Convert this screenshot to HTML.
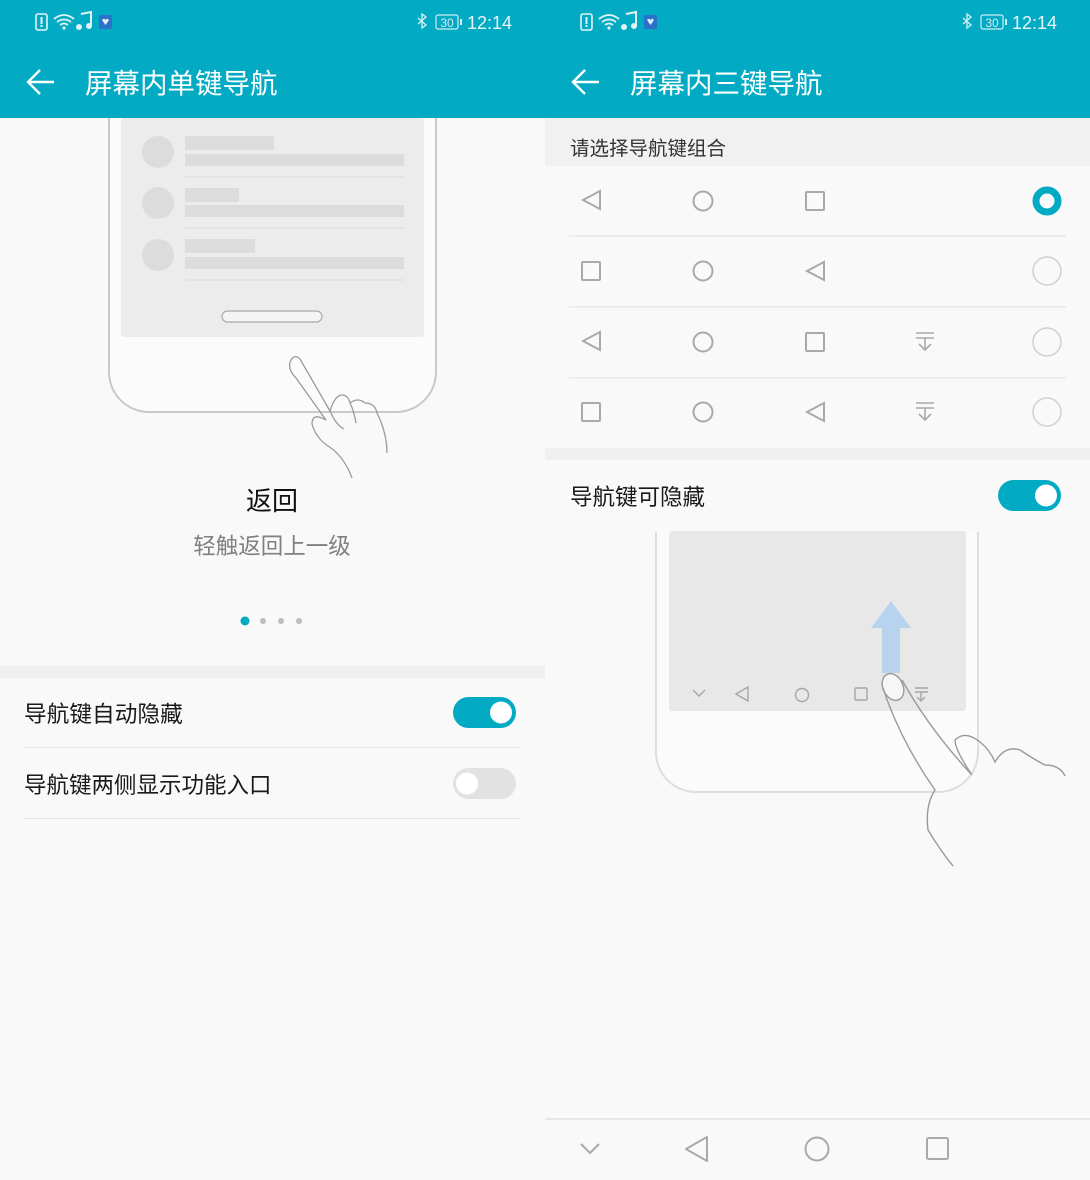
<!DOCTYPE html>
<html><head><meta charset="utf-8"><style>
html,body{margin:0;padding:0;background:#f9f9f9;}
svg{display:block;}
text{font-family:"Liberation Sans","Noto Sans CJK SC",sans-serif;}
</style></head><body>
<svg width="1090" height="1180" viewBox="0 0 1090 1180" xmlns="http://www.w3.org/2000/svg">
<rect width="1090" height="1180" fill="#f9f9f9"/>
<rect x="0" y="0" width="1090" height="118" fill="#03aac3"/>
<g id="sb" fill="#dff4f7">
  <rect x="36" y="14" width="11" height="16" rx="2" fill="none" stroke="#dff4f7" stroke-width="1.6"/>
  <rect x="40.5" y="17" width="2" height="7"/><rect x="40.5" y="25" width="2" height="2"/>
  <path d="M54 19 q10 -8 20 0 M57 22 q7 -5 14 0 M60 25 q4 -3 8 0" fill="none" stroke="#dff4f7" stroke-width="1.8"/>
  <circle cx="64" cy="28" r="1.6"/>
  <path d="M81 14 L91 12 L91 26" fill="none" stroke="#dff4f7" stroke-width="2"/>
  <circle cx="79" cy="27" r="3"/><circle cx="89" cy="26" r="3"/>
  <rect x="99" y="15" width="13" height="14" rx="2" fill="#2a72c8"/>
  <path d="M102 20 q3 -3 3.5 1 q.5 -4 3.5 -1 l-3.5 5z" fill="#e6f0ff"/>
</g>
<text x="512" y="29" font-size="18" fill="#e6f7fa" text-anchor="end">12:14</text>
<rect x="436" y="15" width="22" height="14" rx="2" fill="none" stroke="#cdeef3" stroke-width="1.2"/>
<text x="447" y="27" font-size="12" fill="#cdeef3" text-anchor="middle">30</text>
<rect x="460" y="19" width="2" height="6" fill="#cdeef3"/>
<path d="M418 18 l8 7 l-4 3 v-14 l4 3 l-8 7" fill="none" stroke="#cdeef3" stroke-width="1.4"/>
<g transform="translate(545,0)">
  <g fill="#dff4f7">
  <rect x="36" y="14" width="11" height="16" rx="2" fill="none" stroke="#dff4f7" stroke-width="1.6"/>
  <rect x="40.5" y="17" width="2" height="7"/><rect x="40.5" y="25" width="2" height="2"/>
  <path d="M54 19 q10 -8 20 0 M57 22 q7 -5 14 0 M60 25 q4 -3 8 0" fill="none" stroke="#dff4f7" stroke-width="1.8"/>
  <circle cx="64" cy="28" r="1.6"/>
  <path d="M81 14 L91 12 L91 26" fill="none" stroke="#dff4f7" stroke-width="2"/>
  <circle cx="79" cy="27" r="3"/><circle cx="89" cy="26" r="3"/>
  <rect x="99" y="15" width="13" height="14" rx="2" fill="#2a72c8"/>
  <path d="M102 20 q3 -3 3.5 1 q.5 -4 3.5 -1 l-3.5 5z" fill="#e6f0ff"/>
  </g>
  <text x="512" y="29" font-size="18" fill="#e6f7fa" text-anchor="end">12:14</text>
  <rect x="436" y="15" width="22" height="14" rx="2" fill="none" stroke="#cdeef3" stroke-width="1.2"/>
  <text x="447" y="27" font-size="12" fill="#cdeef3" text-anchor="middle">30</text>
  <rect x="460" y="19" width="2" height="6" fill="#cdeef3"/>
  <path d="M418 18 l8 7 l-4 3 v-14 l4 3 l-8 7" fill="none" stroke="#cdeef3" stroke-width="1.4"/>
</g>
<path d="M54 82 H29 M40 70 L28 82 L40 94" fill="none" stroke="#fff" stroke-width="2.4"/>
<path d="M599 82 H574 M585 70 L573 82 L585 94" fill="none" stroke="#fff" stroke-width="2.4"/>
<text x="85" y="93" font-size="27.5" fill="#fff">屏幕内单键导航</text>
<text x="630" y="93" font-size="27.5" fill="#fff">屏幕内三键导航</text>

<path d="M109 118 V372 a40 40 0 0 0 40 40 H396 a40 40 0 0 0 40 -40 V118" fill="#fbfbfb" stroke="#c9c9c9" stroke-width="2"/>
<rect x="121" y="118" width="303" height="219" rx="3" fill="#ececec"/>
<g fill="#dcdcdc">
<circle cx="158" cy="152" r="16"/><circle cx="158" cy="203" r="16"/><circle cx="158" cy="255" r="16"/>
<rect x="185" y="136" width="89" height="14"/><rect x="185" y="154" width="219" height="12"/>
<rect x="185" y="188" width="54" height="14"/><rect x="185" y="205" width="219" height="12"/>
<rect x="185" y="239" width="70" height="14"/><rect x="185" y="257" width="219" height="12"/>
</g>
<g stroke="#dadada" stroke-width="1"><path d="M185 177 H404 M185 228 H404 M185 280 H404"/></g>
<rect x="222" y="311" width="100" height="11" rx="5.5" fill="#f4f4f4" stroke="#a8a8a8" stroke-width="1.2"/>
<g fill="none" stroke="#9a9a9a" stroke-width="1.3">
<path d="M290 362 q4 -9 10 -3 l30 52 q5 -16 12 -16 q6 0 8 8 q8 -6 15 0 q10 0 12 10 q10 20 10 40"/>
<path d="M290 362 q-2 8 6 16 l30 42 q-14 -8 -14 4 q4 14 16 22 q16 10 24 32"/>
<path d="M330 411 q6 14 14 18 M350 403 q4 8 6 20"/>
</g>
<text x="272" y="510" font-size="26" fill="#111" text-anchor="middle">返回</text>
<text x="272" y="554" font-size="22.5" fill="#808080" text-anchor="middle">轻触返回上一级</text>
<circle cx="245" cy="621" r="4.5" fill="#03aac3"/>
<circle cx="263" cy="621" r="3" fill="#bdbdbd"/><circle cx="281" cy="621" r="3" fill="#bdbdbd"/><circle cx="299" cy="621" r="3" fill="#bdbdbd"/>
<rect x="0" y="666" width="545" height="12" fill="#efefef"/>
<text x="24" y="722" font-size="22.7" fill="#1a1a1a">导航键自动隐藏</text>
<rect x="453" y="697" width="63" height="31" rx="15.5" fill="#03aac3"/>
<circle cx="501" cy="712.5" r="11" fill="#fff"/>
<rect x="24" y="747" width="496" height="1" fill="#e3e3e3"/>
<text x="24" y="793" font-size="22.5" fill="#1a1a1a">导航键两侧显示功能入口</text>
<rect x="453" y="768" width="63" height="31" rx="15.5" fill="#e2e2e2"/>
<circle cx="467" cy="783.5" r="11" fill="#fff"/>
<rect x="24" y="818" width="496" height="1" fill="#e3e3e3"/>

<rect x="545" y="118" width="545" height="48" fill="#f1f1f1"/>
<text x="570" y="155" font-size="19.5" fill="#333">请选择导航键组合</text>
<g fill="none" stroke="#a9a9a9" stroke-width="2">
<path d="M600 191 L583 200 L600 209 Z"/><circle cx="703" cy="201" r="9.5"/><rect x="806" y="192" width="18" height="18" rx="1"/>
<rect x="582" y="262" width="18" height="18" rx="1"/><circle cx="703" cy="271" r="9.5"/><path d="M824 262 L807 271 L824 280 Z"/>
<path d="M600 332 L583 341 L600 350 Z"/><circle cx="703" cy="342" r="9.5"/><rect x="806" y="333" width="18" height="18" rx="1"/>
<path d="M916 333 H934 M916 338 H934 M925 338 V350 M919 344 L925 350 L931 344" stroke-width="1.6"/>
<rect x="582" y="403" width="18" height="18" rx="1"/><circle cx="703" cy="412" r="9.5"/><path d="M824 403 L807 412 L824 421 Z"/>
<path d="M916 403 H934 M916 408 H934 M925 408 V420 M919 414 L925 420 L931 414" stroke-width="1.6"/>
</g>
<circle cx="1047" cy="201" r="11" fill="none" stroke="#03aac3" stroke-width="7"/>
<g fill="none" stroke="#cfcfcf" stroke-width="1.5">
<circle cx="1047" cy="271" r="14"/><circle cx="1047" cy="342" r="14"/><circle cx="1047" cy="412" r="14"/>
</g>
<g fill="#e8e8e8"><rect x="569" y="235" width="497" height="1.5"/><rect x="569" y="306" width="497" height="1.5"/><rect x="569" y="377" width="497" height="1.5"/></g>
<rect x="545" y="448" width="545" height="12" fill="#f0f0f0"/>
<text x="570" y="505" font-size="22.5" fill="#1a1a1a">导航键可隐藏</text>
<rect x="998" y="480" width="63" height="31" rx="15.5" fill="#03aac3"/>
<circle cx="1046" cy="495.5" r="11" fill="#fff"/>

<path d="M656 532 V752 a40 40 0 0 0 40 40 H938 a40 40 0 0 0 40 -40 V532" fill="#fbfbfb" stroke="#dedede" stroke-width="2"/>
<rect x="669" y="531" width="297" height="180" rx="3" fill="#e8e8e8"/>
<path d="M882 673 V628 H871 L891 601 L911 628 H900 V673 Z" fill="#b8d3ee"/>
<g fill="none" stroke="#a6a6a6" stroke-width="1.4">
<path d="M693 690 L699 696 L705 690"/>
<path d="M748 687 L736 694 L748 701 Z"/>
<circle cx="802" cy="695" r="6.5"/>
<rect x="855" y="688" width="12" height="12" rx="1"/>
<path d="M915 688 H928 M915 692 H928 M921 692 V700 M917 697 L921 701 L925 697"/>
</g>
<g fill="none" stroke="#9a9a9a" stroke-width="1.4">
<ellipse cx="893" cy="687" rx="10" ry="14" transform="rotate(-25 893 687)" fill="#f6f6f6"/>
<path d="M883 688 Q900 740 935 790 Q925 805 928 830 Q940 850 953 866"/>
<path d="M902 680 Q930 730 972 775 Q955 750 955 740 Q965 730 980 742 Q990 750 995 762 Q1005 745 1020 750 Q1035 760 1045 765 Q1060 765 1065 776"/>
</g>

<rect x="545" y="1118" width="545" height="2" fill="#e6e6e6"/>
<g fill="none" stroke="#a9a9a9" stroke-width="2">
<path d="M581 1144 L590 1153 L599 1144"/>
<path d="M707 1137 L686 1149 L707 1161 Z" stroke-linejoin="round"/>
<circle cx="817" cy="1149" r="11.5"/>
<rect x="927" y="1138" width="21" height="21" rx="1.5"/>
</g>
</svg>
</body></html>
